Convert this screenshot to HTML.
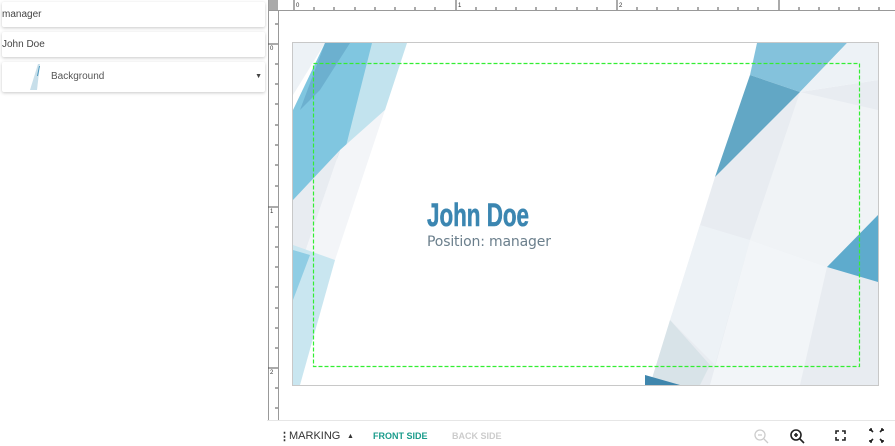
<!DOCTYPE html>
<html><head><meta charset="utf-8"><style>
body{margin:0;width:895px;height:446px;background:#fff;font-family:"Liberation Sans",sans-serif;position:relative;overflow:hidden}
.f{position:absolute;left:2px;width:263px;background:#fff;box-shadow:0 1px 3px rgba(0,0,0,.22);border-radius:2px;font-size:10px;color:#444}
.bb{position:absolute;top:431px;font-size:9px;font-weight:bold}
</style></head><body>
<div class="f" style="top:2px;height:25px;line-height:25px">manager</div>
<div class="f" style="top:32px;height:25px;line-height:25px">John Doe</div>
<div class="f" style="top:62px;height:30px;line-height:30px"><span style="position:absolute;left:49px;color:#555">Background</span>
<svg style="position:absolute;left:26px;top:2px" width="14" height="28"><polygon points="10,0 12,0 9,26 2,26" fill="#c8dfea"/><polygon points="11,2 12,2 10,12 9,12" fill="#4b97bd"/></svg>
<span style="position:absolute;right:3px;top:0;font-size:7px">▼</span></div>

<svg style="position:absolute;left:0;top:0" width="895" height="420">
<rect x="267" y="0" width="628" height="420" fill="#fff"/>
<line x1="268.5" y1="0" x2="268.5" y2="420" stroke="#999"/>
<line x1="278.5" y1="10" x2="278.5" y2="420" stroke="#999"/>
<line x1="268" y1="10.5" x2="895" y2="10.5" stroke="#999"/>
<rect x="269" y="0" width="9" height="10" fill="#aaa"/>
<g stroke="#555">
<path d="M294 0v10M456 0v10M617 0v10M779 0v10M278 44h-10M278 207h-10M278 368h-10"/>
<path d="M314 7v3M334 7v3M355 7v3M375 7v3M395 7v3M415 7v3M435 7v3M476 7v3M496 7v3M516 7v3M536 7v3M556 7v3M577 7v3M597 7v3M637 7v3M657 7v3M678 7v3M698 7v3M718 7v3M738 7v3M758 7v3M799 7v3M819 7v3M839 7v3M859 7v3M879 7v3"/>
<path d="M275 24h3M275 64h3M275 84h3M275 104h3M275 125h3M275 145h3M275 165h3M275 186h3M275 227h3M275 247h3M275 267h3M275 287h3M275 308h3M275 328h3M275 348h3M275 388h3M275 408h3"/>
</g>
<g font-size="6" fill="#333"><text x="296" y="7">0</text><text x="458" y="7">1</text><text x="619" y="7">2</text><text x="270" y="50">0</text><text x="270" y="213">1</text><text x="270" y="374">2</text></g>
<rect x="292.5" y="42.5" width="586" height="343" fill="#fff" stroke="#c8c8c8"/>
<polygon points="293,43 325,43 293,95" fill="#edf2f6"/>
<polygon points="372,43 407,43 385,110 345,150 300,200 320,120" fill="#c2e3ee"/>
<polygon points="325,43 372,43 345,150 293,205 293,110" fill="#80c6e0"/>
<polygon points="325,43 350,43 320,90 300,110" fill="#6cb0cf"/>
<polygon points="385,110 335,260 305,252 340,150" fill="#f3f5f8"/>
<polygon points="293,200 340,150 305,252 293,250" fill="#e8ecf1"/>
<polygon points="293,245 335,260 300,385 293,385" fill="#c9e6f0"/>
<polygon points="293,250 310,255 293,300" fill="#8fcde4"/>
<polygon points="800,92 878,80 878,385 650,385 700,225 715,177" fill="#e8ecf1"/>
<polygon points="800,92 878,110 878,215 827,267 750,240" fill="#f0f3f6"/>
<polygon points="700,225 750,240 715,365 670,320" fill="#edf2f6"/>
<polygon points="750,240 827,267 800,385 710,385" fill="#f2f5f8"/>
<polygon points="650,385 670,320 710,365 700,385" fill="#d8e3e8"/>
<polygon points="757,43 847,43 800,92 750,75" fill="#84c2dc"/>
<polygon points="847,43 878,43 878,80 800,92" fill="#edf2f6"/>
<polygon points="750,75 800,92 715,177" fill="#62a7c5"/>
<polygon points="878,215 827,267 878,282" fill="#5eabcd"/>
<polygon points="645,375 680,385 645,385" fill="#3f86ad"/>
<rect x="313.5" y="63.5" width="546" height="303" fill="none" stroke="#33ee33" stroke-width="1.2" stroke-dasharray="4,2"/>
<text x="427" y="226" font-size="32" font-weight="bold" fill="#3b86b1" stroke="#3b86b1" stroke-width="0.6" transform="translate(427 0) scale(0.7 1) translate(-427 0)">John Doe</text>
<text x="427" y="246" font-family="DejaVu Sans,sans-serif" font-size="14" fill="#6b7f8c" textLength="124">Position: manager</text>
</svg>
<div style="position:absolute;left:267px;top:420px;width:628px;border-top:1px solid #e6e6e6"></div>
<div class="bb" style="left:279px;color:#333;font-size:11px;top:430px">⋮</div>
<div class="bb" style="left:289px;color:#333;font-weight:normal;font-size:11px;top:430px">MARKING</div>
<div class="bb" style="left:347px;font-size:7px;top:433px;color:#333">▲</div>
<div class="bb" style="left:373px;color:#1a9c8c">FRONT SIDE</div>
<div class="bb" style="left:452px;color:#ccc">BACK SIDE</div>
<svg style="position:absolute;left:750px;top:427px" width="140" height="18">
<g fill="none" stroke="#ccc" stroke-width="1.3"><circle cx="10" cy="8" r="5"/><path d="M14 12l4 4M8 8h4"/></g>
<g fill="none" stroke="#222" stroke-width="1.6"><circle cx="46" cy="8" r="5"/><path d="M50 12l4 4M44 8h4M46 6v4"/></g>
<g fill="none" stroke="#222" stroke-width="1.6"><path d="M86 7V4h3M92 4h3v3M95 10v3h-3M89 13h-3v-3"/></g>
<g fill="none" stroke="#222" stroke-width="1.6"><path d="M120 2l3 3M120 2h2M120 2v2M133 2l-3 3M133 2h-2M133 2v2M120 15l3-3M120 15h2M120 15v-2M133 15l-3-3M133 15h-2M133 15v-2"/></g>
</svg>
</body></html>
